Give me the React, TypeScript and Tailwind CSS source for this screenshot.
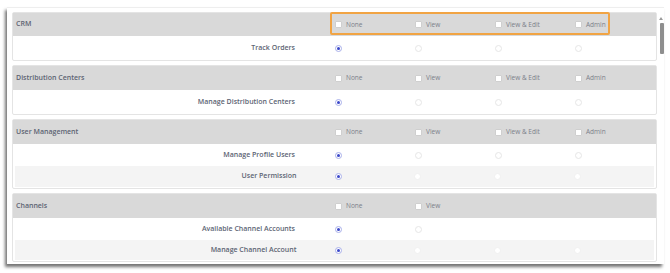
import React from "react";

type Row = { label: string; selected: number; opts: number; h: number; alt?: boolean };
type Section = { title: string; options: string[]; rows: Row[]; hh: number };

const sections: Section[] = [
  {
    title: "CRM",
    hh: 23,
    options: ["None", "View", "View & Edit", "Admin"],
    rows: [{ label: "Track Orders", selected: 0, opts: 4, h: 24 }],
  },
  {
    title: "Distribution Centers",
    hh: 24,
    options: ["None", "View", "View & Edit", "Admin"],
    rows: [{ label: "Manage Distribution Centers", selected: 0, opts: 4, h: 24 }],
  },
  {
    title: "User Management",
    hh: 24,
    options: ["None", "View", "View & Edit", "Admin"],
    rows: [
      { label: "Manage Profile Users", selected: 0, opts: 4, h: 22 },
      { label: "User Permission", selected: 0, opts: 4, h: 21, alt: true },
    ],
  },
  {
    title: "Channels",
    hh: 24,
    options: ["None", "View"],
    rows: [
      { label: "Available Channel Accounts", selected: 0, opts: 2, h: 22 },
      { label: "Manage Channel Account", selected: 0, opts: 4, h: 20, alt: true },
    ],
  },
];

function Radio({ on, alt }: { on: boolean; alt?: boolean }) {
  if (on) {
    return (
      <span className="flex h-[7px] w-[7px] items-center justify-center rounded-full border border-[#a9b0ea] bg-white">
        <span className="h-[3px] w-[3px] rounded-full bg-[#3a47c9]" />
      </span>
    );
  }
  return (
    <span
      className={
        alt
          ? "h-[7px] w-[7px] rounded-full border border-[#f0f0f0] bg-white"
          : "h-[7px] w-[7px] rounded-full border border-[#e6e6e6] bg-white"
      }
    />
  );
}

export default function App() {
  return (
    <div
      className="h-[273px] w-[670px] overflow-hidden bg-white"
      style={{ fontFamily: '"Open Sans", "Noto Sans", sans-serif' }}
    >
      <div className="relative ml-[7px] mt-[7px] h-[257px] w-[657px] overflow-hidden border-t border-[#eeeeee] bg-white pl-[5px] pt-[4px] shadow-[-2px_3px_3px_rgba(0,0,0,0.55)]">
        <div className="flex w-[645px] flex-col gap-[4px]">
          {sections.map((s) => (
            <div key={s.title} className="rounded-[2px] border border-[#e4e4e4] bg-white">
              <div className="flex items-center bg-[#d9d9d9]" style={{ height: s.hh }}>
                <div className="w-[322px] pl-[3px] text-[7px] font-semibold text-[#5d6473]">
                  {s.title}
                </div>
                {s.options.map((o) => (
                  <div key={o} className="flex w-[80px] items-center">
                    <span className="h-[7px] w-[7px] rounded-[1px] border border-[#cfcfcf] bg-white" />
                    <span className="ml-[4px] text-[6.5px] text-[#7b8089]">{o}</span>
                  </div>
                ))}
              </div>
              {s.rows.map((r) => (
                <div
                  key={r.label}
                  className={r.alt ? "mx-[2px] mb-[1px] flex items-center bg-[#f4f4f4]" : "flex items-center"}
                  style={{ height: r.h }}
                >
                  <div
                    className={
                      r.alt
                        ? "w-[320px] pr-[38px] text-right text-[7px] font-semibold text-[#5d6473]"
                        : "w-[322px] pr-[40px] text-right text-[7px] font-semibold text-[#5d6473]"
                    }
                  >
                    {r.label}
                  </div>
                  {Array.from({ length: r.opts }).map((_, i) => (
                    <div key={i} className="flex w-[80px] items-center">
                      <Radio on={i === r.selected} alt={r.alt} />
                    </div>
                  ))}
                </div>
              ))}
            </div>
          ))}
        </div>
        {/* highlight box */}
        <div className="absolute left-[323px] top-[4px] h-[23px] w-[280px] rounded-[2px] border-2 border-[#f1a444]" />
        {/* scrollbar */}
        <div className="absolute right-[1px] top-[9px] h-0 w-0 border-x-[2px] border-b-[3px] border-x-transparent border-b-[#9a9a9a]" />
        <div className="absolute right-0 top-[15px] h-[31px] w-[4px] rounded-[1px] bg-[#8e8e8e]" />
      </div>
    </div>
  );
}
